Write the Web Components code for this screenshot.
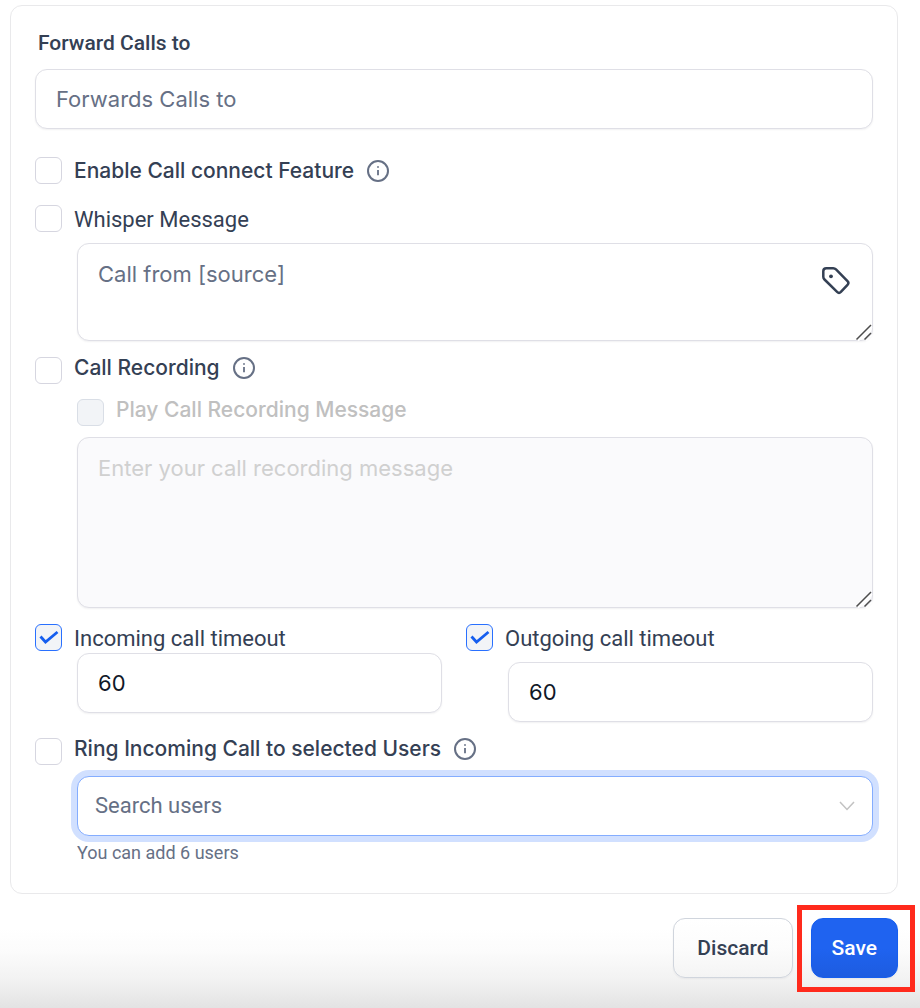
<!DOCTYPE html>
<html lang="en">
<head>
<meta charset="utf-8">
<meta name="viewport" content="width=device-width, initial-scale=1">
<title>Call settings</title>
<style>
  body {
    margin: 0;
    font-family: Roboto, "Liberation Sans", sans-serif;
    color: #344054;
    background: #fff;
  }
</style>
</head>
<body>
<call-settings></call-settings>

<script>
const define = (name, html, setup) => {
  const template = document.createElement('template');
  template.innerHTML = html;
  customElements.define(name, class extends HTMLElement {
    constructor() {
      super();
      this.attachShadow({ mode: 'open' }).append(template.content.cloneNode(true));
    }
    connectedCallback() {
      if (setup) setup(this, this.shadowRoot);
    }
  });
};

define('info-icon', `
  <style>
    :host { display: block; width: 22px; height: 22px; color: #667085; }
    svg { display: block; }
  </style>
  <svg width="22" height="22" viewBox="0 0 22 22" fill="none" stroke="currentColor" stroke-width="2" role="img" aria-label="More information">
    <circle cx="11" cy="11" r="10"/>
    <path d="M11 10v5.2" stroke-width="1.8"/>
    <path d="M11 6.2v1.6" stroke-width="1.8"/>
  </svg>`);

define('check-row', `
  <style>
    :host { display: flex; align-items: flex-start; gap: 13px; height: 27px; font-size: 22px; line-height: 29px; }
    :host([strong]) { font-family: Inter, "Liberation Sans", sans-serif; font-weight: 500; font-size: 21px; line-height: 28px; }
    :host([raised]) { line-height: 22px; }
    :host([disabled]) { color: #c0c0c0; }
    label { display: flex; align-items: flex-start; gap: 12px; white-space: nowrap; }
    input {
      appearance: none; box-sizing: border-box; flex: none; width: 27px; height: 27px; margin: 0;
      border: 1px solid #d6d6e0; border-radius: 6px; background: #fff;
    }
    input:checked {
      border-color: #2970ff;
      background: #f2f4f7 url("data:image/svg+xml,%3Csvg xmlns='http://www.w3.org/2000/svg' viewBox='0 0 25 25' fill='none' stroke='%23155eef' stroke-width='2.8'%3E%3Cpath d='M4.500 11.500l5 5.500L21.500 7'/%3E%3C/svg%3E") center / 25px 25px no-repeat;
    }
    input:disabled { background: #f2f4f7; border-color: #d9dee6; }
    info-icon { margin-top: 3px; }
    :host([raised]) info-icon { margin-top: 0; }
    info-icon[hidden] { display: none; }
  </style>
  <label><input type="checkbox"><span><slot></slot></span></label>
  <info-icon hidden></info-icon>`,
  (host, root) => {
    const box = root.querySelector('input');
    box.checked = host.hasAttribute('checked');
    box.disabled = host.hasAttribute('disabled');
    root.querySelector('info-icon').hidden = !host.hasAttribute('info');
  });

define('text-field', `
  <style>
    :host { display: block; }
    label { display: block; margin: 0 3px 13px; font-size: 21px; font-weight: 500; line-height: 26px; }
    label[hidden] { display: none; }
    input {
      box-sizing: border-box; display: block; width: 100%; height: 60px; padding: 0 20px;
      border: 1px solid #dfdfe6; border-radius: 12px; background: #fff;
      box-shadow: 0 1px 2px rgba(16, 24, 40, .06);
      font: 400 22px/30px Inter, "Liberation Sans", sans-serif; color: #101828; outline: none;
    }
    input::placeholder { color: #667085; opacity: 1; }
  </style>
  <label for="field"></label>
  <input id="field" type="text">`,
  (host, root) => {
    const label = root.querySelector('label');
    const input = root.querySelector('input');
    label.textContent = host.getAttribute('label') || '';
    label.hidden = !label.textContent;
    if (host.hasAttribute('name')) input.setAttribute('aria-label', host.getAttribute('name'));
    input.placeholder = host.getAttribute('placeholder') || '';
    input.value = host.getAttribute('value') || '';
  });

define('text-area', `
  <style>
    :host { display: block; position: relative; }
    textarea {
      box-sizing: border-box; display: block; width: 100%; height: 98px; padding: 15px 20px;
      border: 1px solid #dfdfe6; border-radius: 12px; background: #fff; resize: none;
      box-shadow: 0 1px 2px rgba(16, 24, 40, .06); outline: none;
      font: 400 22px/30px Inter, "Liberation Sans", sans-serif; color: #101828;
    }
    :host([tall]) textarea { height: 171px; }
    textarea::placeholder { color: #667085; opacity: 1; }
    textarea:disabled { background: #fafafc; }
    textarea:disabled::placeholder { color: #d0d0d0; }
    .grip { position: absolute; right: 0; bottom: 0; }
    ::slotted(*) { position: absolute; top: 22px; right: 22px; }
  </style>
  <textarea></textarea>
  <slot></slot>
  <svg class="grip" width="18" height="18" viewBox="0 0 18 18" fill="none" stroke-width="1.5" aria-hidden="true">
    <path d="M2 17L16 3M10 17l6-6" stroke="#fff" transform="translate(1 1)"/>
    <path d="M1.500 16.500L16 2M9.500 16.500L16 10" stroke="#4d4d4d"/>
  </svg>`,
  (host, root) => {
    const area = root.querySelector('textarea');
    area.placeholder = host.getAttribute('placeholder') || '';
    area.setAttribute('aria-label', host.getAttribute('name') || '');
    area.disabled = host.hasAttribute('disabled');
  });

define('tag-button', `
  <style>
    :host { display: block; }
    button { display: block; padding: 0; border: 0; background: none; color: #344054; cursor: pointer; }
    svg { display: block; }
  </style>
  <button type="button" aria-label="Insert custom value">
    <svg width="30" height="30" viewBox="0 0 30 30" fill="none" stroke="currentColor" stroke-width="2.5" stroke-linejoin="round">
      <path d="M2.300 6.200Q2.300 3.200 5.300 3.200H12.200Q13.800 3.200 15 4.400L26.500 16.200Q28.300 18 26.500 19.900L19.900 26.900Q18 28.800 16.100 26.900L3.500 14.500Q2.300 13.300 2.300 11.800Z"/>
      <circle cx="10" cy="11.300" r="1.900" fill="currentColor" stroke="none"/>
    </svg>
  </button>`);

define('user-select', `
  <style>
    :host { display: block; }
    .box { position: relative; }
    select {
      appearance: none; box-sizing: border-box; display: block; width: 100%; height: 60px; padding: 0 48px 0 17px;
      border: 1px solid #84adff; border-radius: 12px; background: #fff; outline: none;
      box-shadow: 0 0 0 6px #d1e0ff;
      font: 400 22px/30px Roboto, "Liberation Sans", sans-serif; color: #667085;
    }
    svg { position: absolute; right: 18px; top: 25px; pointer-events: none; }
    p { margin: 7px 0 0; font-size: 18px; line-height: 20px; color: #667085; }
  </style>
  <div class="box">
    <select aria-label="Users to ring" aria-describedby="hint"><option>Search users</option></select>
    <svg width="16" height="10" viewBox="0 0 16 10" fill="none" stroke="#c2c2c2" stroke-width="1.500" aria-hidden="true"><path d="M1 1l7 7.500L15 1"/></svg>
  </div>
  <p id="hint"><slot></slot></p>`);

define('action-button', `
  <style>
    :host { display: block; position: relative; }
    button {
      box-sizing: border-box; display: block; height: 60px; padding: 0 23px;
      border: 1px solid #d0d5dd; border-radius: 12px;
      background: linear-gradient(#fff, #fcfcfc 50%, #f4f4f4);
      box-shadow: 0 1px 2px rgba(16, 24, 40, .05);
      font: 500 21px/30px Roboto, "Liberation Sans", sans-serif; color: #344054;
    }
    :host([primary]) button { padding: 0 20px; border-color: #155eef; background: linear-gradient(#1f63f0 50%, #1d5ce0); color: #fff; }
    :host([highlighted])::after {
      content: ""; position: absolute; inset: -13px -17px -14px -14px;
      border: 5px solid #ff2a1c; pointer-events: none;
    }
  </style>
  <button type="button"><slot></slot></button>`);

define('call-settings', `
  <style>
    :host {
      display: block; box-sizing: border-box; min-height: 100vh; padding: 5px 22px 30px 10px;
      background: linear-gradient(to top, #e3e3e3, #f2f2f2 28px, #fcfcfc 58px, #fff 80px) no-repeat;
    }
    .card { padding: 24px 24px 30px; border: 1px solid #e9e9eb; border-radius: 12px; }
    .indent { margin: 11px 0 0 42px; }
    .close { margin-top: 2px; }
    .first { margin-top: 28px; }
    .second { margin-top: 21px; }
    .group { margin-top: 16px; }
    .nested { margin: 15px 0 0 42px; }
    .columns { display: grid; grid-template-columns: 1fr 1fr; gap: 24px; }
    footer { display: flex; justify-content: flex-end; gap: 18px; margin-top: 24px; }
  </style>
  <form class="card">
    <text-field label="Forward Calls to" placeholder="Forwards Calls to"></text-field>
    <check-row class="first" strong info>Enable Call connect Feature</check-row>
    <check-row class="second">Whisper Message</check-row>
    <text-area class="indent" name="Whisper message" placeholder="Call from [source]"><tag-button></tag-button></text-area>
    <check-row class="group" strong raised info>Call Recording</check-row>
    <check-row class="nested" strong raised disabled>Play Call Recording Message</check-row>
    <text-area class="indent" tall disabled name="Call recording message" placeholder="Enter your call recording message"></text-area>
    <div class="columns group">
      <div>
        <check-row checked>Incoming call timeout</check-row>
        <text-field class="indent close" name="Incoming call timeout in seconds" value="60"></text-field>
      </div>
      <div>
        <check-row checked>Outgoing call timeout</check-row>
        <text-field class="indent" name="Outgoing call timeout in seconds" value="60"></text-field>
      </div>
    </div>
    <check-row class="group" strong raised info>Ring Incoming Call to selected Users</check-row>
    <user-select class="indent">You can add 6 users</user-select>
  </form>
  <footer>
    <action-button>Discard</action-button>
    <action-button primary highlighted>Save</action-button>
  </footer>`);
</script>
</body>
</html>
